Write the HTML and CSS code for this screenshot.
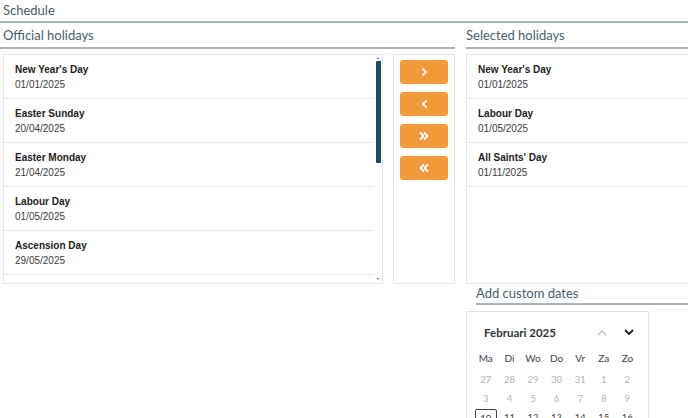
FILE: index.html
```html
<!DOCTYPE html>
<html>
<head>
<meta charset="utf-8">
<link rel="stylesheet" href="styles.css">
</head>
<body>
<div class="page">
  <h1 class="title">Schedule</h1>
  <div class="main">
    <section class="left">
      <h2 class="heading pad">Official holidays</h2>
      <div class="lists">
        <div class="listbox">
          <div class="items">
            <div class="item"><div class="name">New Year's Day</div><div class="date">01/01/2025</div></div>
            <div class="item"><div class="name">Easter Sunday</div><div class="date">20/04/2025</div></div>
            <div class="item"><div class="name">Easter Monday</div><div class="date">21/04/2025</div></div>
            <div class="item"><div class="name">Labour Day</div><div class="date">01/05/2025</div></div>
            <div class="item"><div class="name">Ascension Day</div><div class="date">29/05/2025</div></div>
            <div class="item"></div>
          </div>
          <div class="scrollbar">
            <span class="arrow-up"></span>
            <span class="thumb"></span>
            <span class="spacer"></span>
            <span class="arrow-down"></span>
          </div>
        </div>
        <div class="actions">
          <button class="btn" aria-label="Add"><svg width="7" height="8" viewBox="0 0 7 8"><path d="M2 1 L5 4 L2 7" fill="none" stroke="#fff" stroke-width="1.8" stroke-linecap="round" stroke-linejoin="round"/></svg></button>
          <button class="btn" aria-label="Remove"><svg width="7" height="8" viewBox="0 0 7 8"><path d="M5 1 L2 4 L5 7" fill="none" stroke="#fff" stroke-width="1.8" stroke-linecap="round" stroke-linejoin="round"/></svg></button>
          <button class="btn" aria-label="Add all"><svg width="10" height="8" viewBox="0 0 10 8"><path d="M1.5 1 L4.5 4 L1.5 7 M5.5 1 L8.5 4 L5.5 7" fill="none" stroke="#fff" stroke-width="1.8" stroke-linecap="round" stroke-linejoin="round"/></svg></button>
          <button class="btn" aria-label="Remove all"><svg width="10" height="8" viewBox="0 0 10 8"><path d="M4.5 1 L1.5 4 L4.5 7 M8.5 1 L5.5 4 L8.5 7" fill="none" stroke="#fff" stroke-width="1.8" stroke-linecap="round" stroke-linejoin="round"/></svg></button>
        </div>
      </div>
    </section>
    <section class="right">
      <h2 class="heading">Selected holidays</h2>
      <div class="selbox">
        <div class="item wide"><div class="name">New Year's Day</div><div class="date">01/01/2025</div></div>
        <div class="item wide"><div class="name">Labour Day</div><div class="date">01/05/2025</div></div>
        <div class="item wide"><div class="name">All Saints' Day</div><div class="date">01/11/2025</div></div>
      </div>
      <h2 class="heading custom">Add custom dates</h2>
      <div class="calendar">
        <div class="cal-head">
          <span class="month">Februari 2025</span>
          <span class="navs">
            <svg class="nav" width="10" height="7" viewBox="0 0 10 7"><path d="M1.5 5.5 L5 2 L8.5 5.5" fill="none" stroke="#bdbdbd" stroke-width="1.4" stroke-linecap="round" stroke-linejoin="round"/></svg>
            <svg class="nav" width="10" height="7" viewBox="0 0 10 7"><path d="M1.5 1.5 L5 5 L8.5 1.5" fill="none" stroke="#222" stroke-width="1.8" stroke-linecap="round" stroke-linejoin="round"/></svg>
          </span>
        </div>
        <div class="cal-grid weekdays">
          <span>Ma</span><span>Di</span><span>Wo</span><span>Do</span><span>Vr</span><span>Za</span><span>Zo</span>
        </div>
        <div class="cal-grid days">
          <span>27</span><span>28</span><span>29</span><span>30</span><span>31</span><span>1</span><span>2</span>
          <span>3</span><span>4</span><span>5</span><span>6</span><span>7</span><span>8</span><span>9</span>
          <span class="cur">10</span><span class="dark">11</span><span class="dark">12</span><span class="dark">13</span><span class="dark">14</span><span class="dark">15</span><span class="dark">16</span>
        </div>
      </div>
    </section>
  </div>
</div>
</body>
</html>
```
FILE: styles.css
```css
html, body {
  margin: 0;
  padding: 0;
  overflow: hidden;
  background: #fff;
}
.page {
  width: 720px;
  font-family: "Liberation Sans", Arial, sans-serif;
}
.title,
.heading {
  margin: 0;
  font-family: Lato, "Open Sans", sans-serif;
  font-weight: 400;
  font-size: 13px;
  line-height: 19px;
  color: #48606f;
  border-bottom: 2px solid #a9b3ba;
}
.title {
  padding: 1px 3px 1px;
}
.heading {
  padding: 3px 0 2px;
}
.heading.pad {
  padding-left: 3px;
}
.main {
  display: flex;
  gap: 11px;
}
.left {
  width: 455px;
  flex: none;
}
.right {
  width: 250px;
  flex: none;
}
.lists {
  display: flex;
  gap: 10px;
  margin: 5px 0 0 3px;
}
.listbox {
  width: 380px;
  height: 230px;
  box-sizing: border-box;
  border: 1px solid #e3e6e9;
  display: flex;
  overflow: hidden;
}
.items {
  width: 370px;
  flex: none;
  overflow: hidden;
}
.item {
  box-sizing: border-box;
  height: 44px;
  padding: 7px 11px 0;
  border-bottom: 1px solid #e6e9eb;
}
.name {
  font-size: 10px;
  font-weight: 700;
  line-height: 15px;
  color: #222;
}
.date {
  font-size: 10px;
  line-height: 15px;
  color: #3d3d3d;
}
.scrollbar {
  width: 8px;
  flex: none;
  display: flex;
  flex-direction: column;
  align-items: center;
  padding: 2px 0 3px;
  box-sizing: border-box;
}
.arrow-up,
.arrow-down {
  width: 0;
  height: 0;
  border-left: 1.5px solid transparent;
  border-right: 1.5px solid transparent;
}
.arrow-up {
  border-bottom: 2px solid #555;
}
.arrow-down {
  border-top: 2px solid #555;
}
.thumb {
  width: 5px;
  height: 102px;
  margin-top: 2px;
  background: #21495a;
  border-radius: 1px;
}
.spacer {
  flex: 1;
}
.actions {
  width: 62px;
  height: 230px;
  box-sizing: border-box;
  border: 1px solid #e3e6e9;
  padding: 5px 6px;
  display: flex;
  flex-direction: column;
  gap: 8px;
}
.btn {
  height: 24px;
  width: 48px;
  border: 0;
  border-radius: 3px;
  background: #f2993a;
  display: flex;
  align-items: center;
  justify-content: center;
  padding: 0;
}
.btn svg {
  display: block;
}
.selbox {
  margin-top: 5px;
  height: 230px;
  box-sizing: border-box;
  border: 1px solid #e3e6e9;
  border-right: 0;
}
.heading.custom {
  margin-left: 10px;
  padding: 0;
}
.calendar {
  margin-top: 6px;
  width: 183px;
  height: 107px;
  overflow: hidden;
  box-sizing: border-box;
  border: 1px solid #e3e6e9;
  border-bottom: 0;
  padding: 0 0 0 7px;
  font-family: Lato, "Open Sans", sans-serif;
}
.cal-head {
  height: 40px;
  display: flex;
  align-items: center;
  justify-content: space-between;
  padding: 0 14px 0 10px;
}
.month {
  font-size: 11.5px;
  font-weight: 700;
  color: #333;
}
.navs {
  display: flex;
  gap: 17px;
  align-items: center;
}
.nav {
  display: block;
}
.cal-grid {
  display: grid;
  grid-template-columns: repeat(7, 23.6px);
  text-align: center;
}
.weekdays {
  font-size: 10px;
  line-height: 12px;
  color: #444;
  margin-bottom: 6px;
}
.days {
  font-size: 9.5px;
  grid-auto-rows: 19px;
  line-height: 19px;
  color: #b3b3b3;
}
.days .dark {
  color: #444;
}
.days .cur {
  color: #444;
  border: 1px solid #444;
  border-radius: 2px;
  margin: 1px 1px 0;
  line-height: 17px;
}
```
